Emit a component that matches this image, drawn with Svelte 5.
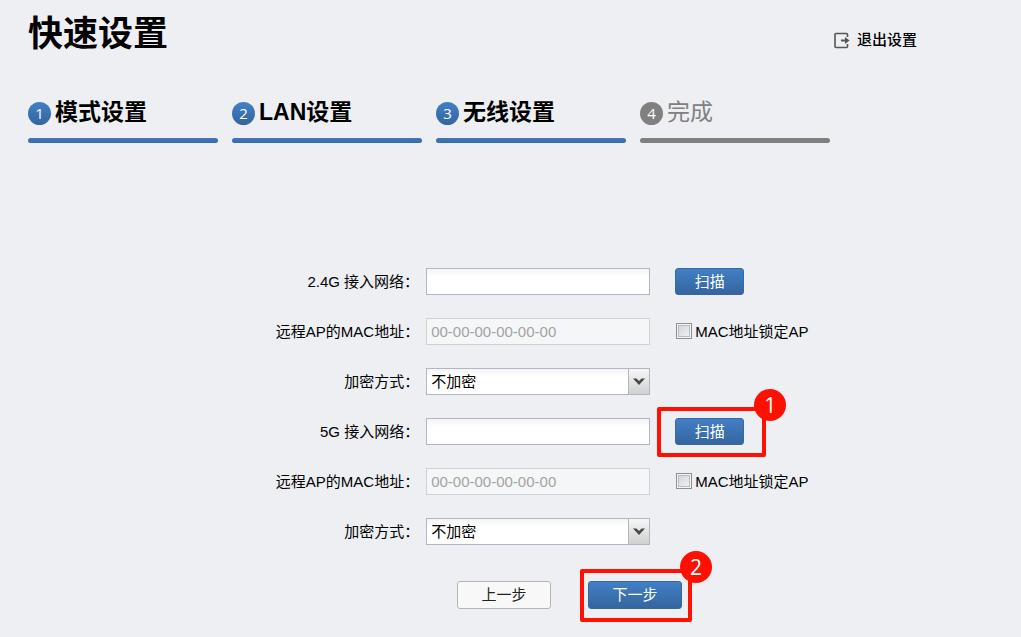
<script lang="ts">
  const steps = [
    { label: '模式设置', done: true },
    { label: 'LAN设置', done: true },
    { label: '无线设置', done: true },
    { label: '完成', done: false },
  ];

  let bands = $state([
    { id: 'band24', name: '2.4G 接入网络', ssid: '', mac: '', lock: false, security: 'none', mark: 0 },
    { id: 'band5', name: '5G 接入网络', ssid: '', mac: '', lock: false, security: 'none', mark: 1 },
  ]);
</script>

{#snippet callout(n: number)}
  <span class="callout" class:wide={n === 1}>
    <span class="mark">{n}</span>
  </span>
{/snippet}

<main>
  <header>
    <h1>快速设置</h1>
    <a class="exit" href="#exit">
      <svg width="17" height="17" viewBox="0 0 17 17" fill="none" stroke="#555" aria-hidden="true">
        <path d="M14.500 5V2.500Q14.500 1.500 13.500 1.500H3Q2 1.500 2 2.500V14.500Q2 15.500 3 15.500H13.500Q14.500 15.500 14.500 14.500V12" stroke-width="1.600" />
        <path d="M8 8.500H13" stroke-width="2" />
        <path d="M12 5L16.500 8.500L12 12Z" fill="#555" stroke="none" />
      </svg>
      <span>退出设置</span>
    </a>
  </header>

  <ol class="steps">
    {#each steps as step, i}
      <li class:done={step.done}>
        <div class="step">
          <span class="num">{i + 1}</span>
          <span class="name">{step.label}</span>
        </div>
        <div class="bar"></div>
      </li>
    {/each}
  </ol>

  <form onsubmit={(e) => e.preventDefault()}>
    {#each bands as band}
      <div class="row">
        <label for="{band.id}-ssid">{band.name}：</label>
        <input class="text" id="{band.id}-ssid" type="text" bind:value={band.ssid} />
        <div class="extra">
          <span class="anchor">
            <button class="primary scan" type="button">扫描</button>
            {#if band.mark}{@render callout(band.mark)}{/if}
          </span>
        </div>
      </div>
      <div class="row">
        <label for="{band.id}-mac">远程AP的MAC地址：</label>
        <input
          class="text"
          id="{band.id}-mac"
          type="text"
          placeholder="00-00-00-00-00-00"
          disabled={!band.lock}
          bind:value={band.mac}
        />
        <div class="extra">
          <label class="check">
            <input type="checkbox" bind:checked={band.lock} />
            <span>MAC地址锁定AP</span>
          </label>
        </div>
      </div>
      <div class="row">
        <label for="{band.id}-security">加密方式：</label>
        <div class="select">
          <select id="{band.id}-security" bind:value={band.security}>
            <option value="none">不加密</option>
            <option value="wpa">WPA-PSK/WPA2-PSK</option>
          </select>
          <span class="arrow">
            <svg width="12" height="8" viewBox="0 0 12 8" aria-hidden="true">
              <path d="M0 0.500H3.500L6 3L8.500 0.500H12L6 7Z" fill="#484848" />
            </svg>
          </span>
        </div>
      </div>
    {/each}

    <div class="actions">
      <button class="plain" type="button">上一步</button>
      <span class="anchor">
        <button class="primary" type="submit">下一步</button>
        {@render callout(2)}
      </span>
    </div>
  </form>
</main>

<style>
  :global(body) {
    margin: 0;
    background: #edeff3;
  }
  main {
    padding: 8px 28px 28px;
    font-family: 'Liberation Sans', 'Noto Sans CJK SC', sans-serif;
    font-size: 15px;
    line-height: 20px;
    color: #000;
  }
  header {
    display: flex;
    justify-content: space-between;
    align-items: center;
    max-width: 889px;
    height: 52px;
  }
  h1 {
    margin: 0;
    font-size: 35px;
    line-height: 52px;
    font-weight: 700;
  }
  .exit {
    display: flex;
    align-items: center;
    gap: 7px;
    padding-top: 12px;
    color: #000;
    font-weight: 500;
    text-decoration: none;
  }
  .steps {
    display: flex;
    gap: 14px;
    margin: 0;
    padding: 36px 0 0;
    list-style: none;
  }
  .steps li {
    flex: 1;
    max-width: 190px;
    color: #808080;
  }
  .step {
    display: flex;
    align-items: center;
    gap: 4px;
    height: 34px;
  }
  .num {
    width: 23px;
    height: 23px;
    margin-top: 1px;
    border-radius: 50%;
    background: #808080;
    color: #fff;
    font-family: 'Open Sans', sans-serif;
    line-height: 22px;
    text-align: center;
  }
  .name {
    padding-bottom: 2px;
    font-size: 23px;
    line-height: 32px;
  }
  .bar {
    height: 5px;
    margin-top: 8px;
    border-radius: 3px;
    background: #808080;
  }
  .done .name {
    color: #000;
    font-weight: 700;
  }
  .done .num {
    background: linear-gradient(#427fc6, #35659e);
  }
  .done .bar {
    background: linear-gradient(#4079bd, #386aa6);
  }
  form {
    padding-top: 125px;
  }
  .row {
    display: grid;
    grid-template-columns: 36fr 224px 31fr;
    align-items: center;
    height: 27px;
    margin-bottom: 23px;
  }
  .row > label {
    padding-right: 7px;
    text-align: right;
  }
  .text,
  select {
    box-sizing: border-box;
    width: 100%;
    height: 27px;
    margin: 0;
    padding: 0 4px;
    border: 1px solid #b1b5c5;
    border-radius: 0;
    background: linear-gradient(#f3f4f5, #fff 8px);
    color: #000;
    font: inherit;
  }
  .text:disabled {
    border-color: #cfd1da;
    background: #f5f6f8;
  }
  .text::placeholder {
    color: #a3a3a3;
  }
  .select {
    position: relative;
  }
  select {
    display: block;
    appearance: none;
  }
  .arrow {
    position: absolute;
    top: 1px;
    right: 1px;
    bottom: 1px;
    display: flex;
    align-items: center;
    justify-content: center;
    width: 20px;
    border-left: 1px solid #b1b5c5;
    background: linear-gradient(#f7f7f7, #d0d0d0);
    pointer-events: none;
  }
  .extra {
    display: flex;
    align-items: center;
    padding-left: 25px;
  }
  .check {
    display: flex;
    align-items: center;
    gap: 3px;
    padding-left: 1px;
    white-space: nowrap;
  }
  .check input {
    appearance: none;
    box-sizing: border-box;
    width: 16px;
    height: 16px;
    margin: 0 0 2px;
    border: 1px solid #8e8f8f;
    background: linear-gradient(135deg, #cdd0d6, #f6f6f6);
    box-shadow:
      inset 0 0 0 1px #f4f4f4,
      inset 0 0 0 2px #b9bcc2;
  }
  .check input:checked {
    background: #3b70b1;
  }
  button {
    box-sizing: border-box;
    width: 94px;
    height: 28px;
    padding: 0;
    border-radius: 3px;
    font: inherit;
    cursor: pointer;
  }
  .primary {
    border: 1px solid #3868a3;
    background: linear-gradient(#427fc6, #35659e);
    color: #fff;
  }
  .scan {
    width: 69px;
    height: 27px;
  }
  .plain {
    border: 1px solid #b5b5b5;
    background: #f8f8f8;
    color: #222;
  }
  .actions {
    display: grid;
    grid-template-columns: 94px 94px;
    gap: 37px;
    justify-content: center;
    padding: 13px 0 0 118px;
  }
  .anchor {
    position: relative;
    display: flex;
  }
  .callout {
    position: absolute;
    inset: -12px -10px -13px -8px;
    border: 4px solid #ff1000;
    border-radius: 2px;
    pointer-events: none;
  }
  .callout.wide {
    inset: -11px -22px -12px -18px;
  }
  .mark {
    position: absolute;
    top: -22px;
    right: -24px;
    width: 32px;
    height: 32px;
    border-radius: 50%;
    background: #ff1000;
    color: #fff;
    font-family: 'Open Sans', sans-serif;
    font-size: 21px;
    line-height: 32px;
    text-align: center;
  }
</style>
